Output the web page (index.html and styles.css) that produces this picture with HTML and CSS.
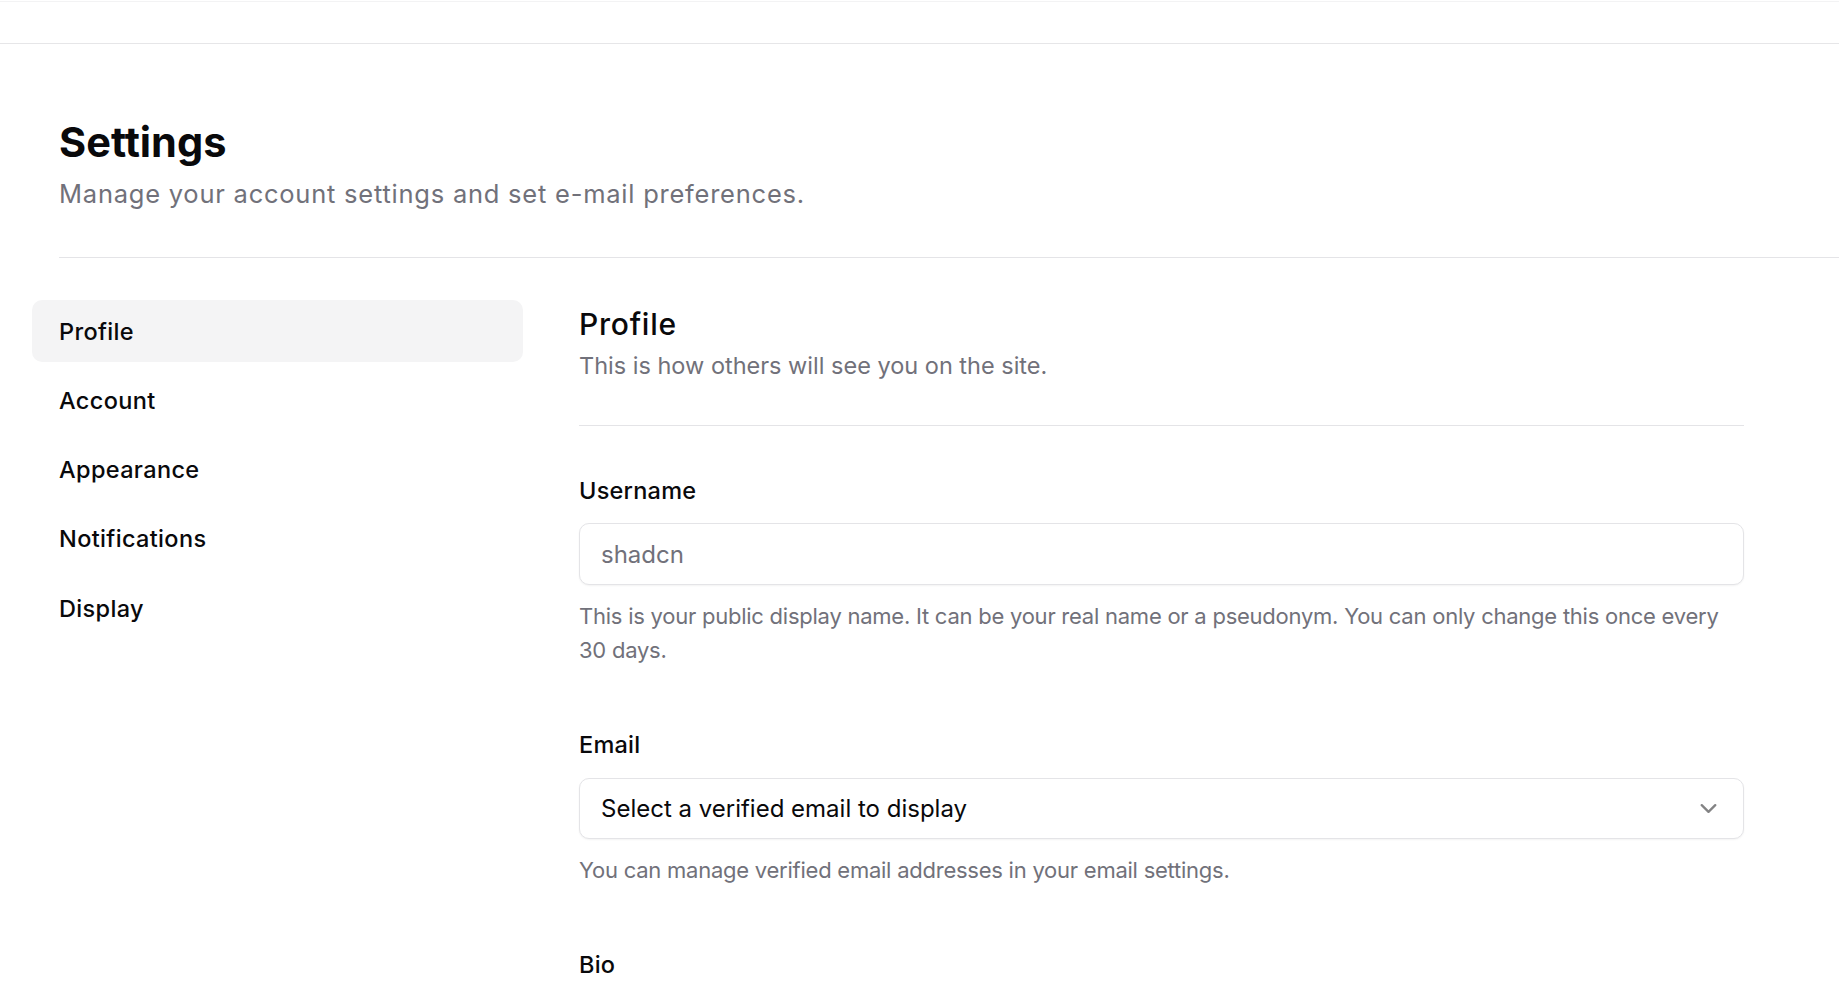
FILE: index.html
```html
<!DOCTYPE html>
<html lang="en">
<head>
<meta charset="utf-8">
<title>Settings</title>
<link rel="stylesheet" href="styles.css">
</head>
<body>
<header class="topbar"></header>
<main class="page">
  <div class="page-head">
    <h2 class="page-title">Settings</h2>
    <p class="page-desc">Manage your account settings and set e-mail preferences.</p>
  </div>
  <hr class="page-sep">
  <div class="layout">
    <aside class="sidenav">
      <a class="nav-item active">Profile</a>
      <a class="nav-item">Account</a>
      <a class="nav-item">Appearance</a>
      <a class="nav-item">Notifications</a>
      <a class="nav-item">Display</a>
    </aside>
    <section class="content">
      <h3 class="section-title">Profile</h3>
      <p class="section-desc">This is how others will see you on the site.</p>
      <hr class="section-sep">
      <form class="form">
        <div class="field">
          <label class="label">Username</label>
          <input class="input" type="text" placeholder="shadcn">
          <p class="help">This is your public display name. It can be your real name or a pseudonym. You can only change this once every 30 days.</p>
        </div>
        <div class="field">
          <label class="label">Email</label>
          <button type="button" class="select">
            <span>Select a verified email to display</span>
            <svg class="chev" viewBox="0 0 24 24" fill="none" stroke="currentColor" stroke-width="2" stroke-linecap="round" stroke-linejoin="round"><path d="m6 9 6 6 6-6"/></svg>
          </button>
          <p class="help">You can manage verified email addresses in your email settings.</p>
        </div>
        <div class="field">
          <label class="label">Bio</label>
        </div>
      </form>
    </section>
  </div>
</main>
</body>
</html>
```
FILE: styles.css
```css
* { box-sizing: border-box; }
html, body { margin: 0; padding: 0; background: #ffffff; }
body {
  font-family: Inter, "Liberation Sans", sans-serif;
  color: #09090b;
  overflow: hidden;
}
.topbar {
  margin-top: 1px;
  height: 43px;
  border-top: 1px solid #f3f3f4;
  border-bottom: 1px solid #e6e6e8;
}
.page {
  padding-left: 59px;
}
.page-head {
  padding-top: 74px;
}
.page-title {
  margin: 0;
  font-size: 41.5px;
  line-height: 48px;
  font-weight: 700;
  letter-spacing: 0;
}
.page-desc {
  margin: 12px 0 0;
  font-size: 25.5px;
  line-height: 32px;
  letter-spacing: 0.03em;
  color: #71717a;
}
.page-sep {
  margin: 47px 0 0;
  border: 0;
  border-top: 1px solid #e4e4e7;
  height: 0;
}
.layout {
  display: flex;
  gap: 56px;
  padding-top: 42px;
}
.sidenav {
  margin-left: -27px;
  width: 491px;
  flex: none;
  display: flex;
  flex-direction: column;
  gap: 7.3px;
}
.nav-item {
  display: flex;
  align-items: center;
  height: 62px;
  padding-left: 27px;
  border-radius: 10px;
  font-size: 23.5px;
  font-weight: 500;
  letter-spacing: 0.015em;
  color: #09090b;
}
.nav-item.active { background: #f4f4f5; }
.content {
  width: 1165px;
  flex: none;
}
.section-title {
  margin: 0;
  font-size: 30px;
  line-height: 49px;
  font-weight: 500;
  letter-spacing: 0.025em;
}
.section-desc {
  margin: 0;
  font-size: 23.5px;
  line-height: 33px;
  color: #71717a;
}
.section-sep {
  margin: 43px 0 0;
  border: 0;
  border-top: 1px solid #e4e4e7;
  height: 0;
}
.form {
  padding-top: 50px;
  display: flex;
  flex-direction: column;
  gap: 63px;
}
.field { display: flex; flex-direction: column; }
.label {
  font-size: 23.5px;
  line-height: 30px;
  font-weight: 500;
  letter-spacing: 0.01em;
}
.input, .select {
  margin-top: 17px;
  height: 62px;
  width: 100%;
  border: 1px solid #e4e4e7;
  border-radius: 10px;
  background: #fff;
  box-shadow: 0 1px 2px rgba(0, 0, 0, 0.05);
  padding: 0 21px;
  font-family: inherit;
  font-size: 24px;
  color: #09090b;
  outline: none;
}
.input::placeholder { color: #71717a; }
.select {
  display: flex;
  align-items: center;
  justify-content: space-between;
  text-align: left;
  height: 61px;
  margin-top: 18px;
}
.chev {
  width: 27px;
  height: 27px;
  color: #09090b;
  opacity: 0.5;
}
.help {
  margin: 14px 0 0;
  font-size: 22px;
  line-height: 34px;
  letter-spacing: -0.011em;
  color: #71717a;
}
```
